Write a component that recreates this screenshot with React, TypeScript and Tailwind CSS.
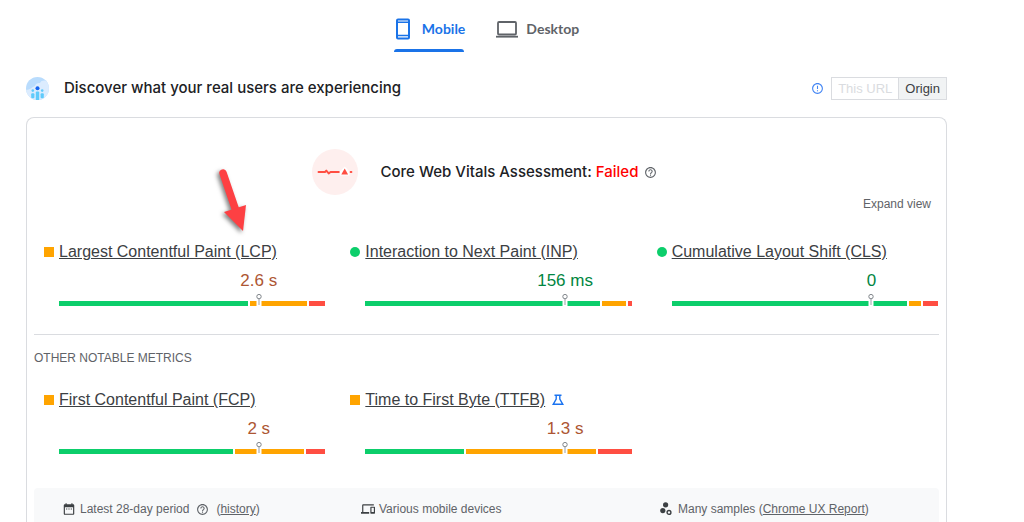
import React from "react";
import { MdDateRange, MdDevices, MdErrorOutline, MdHelpOutline } from "react-icons/md";

type Status = "good" | "average";

interface Metric {
  name: string;
  value: string;
  status: Status;
  // good, needs improvement, poor
  split: [number, number, number];
  experimental?: boolean;
}

const coreMetrics: Metric[] = [
  { name: "Largest Contentful Paint (LCP)", value: "2.6 s", status: "average", split: [189, 57, 16] },
  { name: "Interaction to Next Paint (INP)", value: "156 ms", status: "good", split: [234, 24, 4] },
  { name: "Cumulative Layout Shift (CLS)", value: "0", status: "good", split: [235, 12, 15] },
];

const otherMetrics: Metric[] = [
  { name: "First Contentful Paint (FCP)", value: "2 s", status: "average", split: [174, 69, 19] },
  {
    name: "Time to First Byte (TTFB)",
    value: "1.3 s",
    status: "average",
    split: [99, 129, 34],
    experimental: true,
  },
];

const barColors = ["bg-[#0cce6b]", "bg-[#ffa400]", "bg-[#ff4e42]"];

const PhoneIcon = () => (
  <svg width="16" height="22" viewBox="0 0 16 22" fill="none" stroke="currentColor" aria-hidden="true">
    <rect x="2" y="1.5" width="12" height="19" rx="1" strokeWidth="2" />
    <path d="M2 4.3h12M2 17.5h12" strokeWidth="1.6" />
  </svg>
);

const LaptopIcon = () => (
  <svg width="22" height="17" viewBox="0 0 22 17" fill="none" stroke="currentColor" aria-hidden="true">
    <rect x="2" y="1" width="18" height="12.5" rx="1" strokeWidth="1.8" />
    <path d="M0 15.7h22" strokeWidth="1.8" />
  </svg>
);

const UsersIcon = () => (
  <svg width="23" height="23" viewBox="0 0 23 23" aria-hidden="true">
    <clipPath id="users-clip">
      <circle cx="11.5" cy="11.5" r="11.5" />
    </clipPath>
    <g clipPath="url(#users-clip)">
      <rect width="23" height="23" fill="#b9dcfd" />
      <path d="M0 13c4 0 6-3 9-4 1-3 3-3 5-3 1-3 4-3 10-2v20H0z" fill="#dcecfe" />
      <g fill="#5fcbfb">
        <rect x="5.2" y="16.2" width="3.2" height="5" rx="1" />
        <rect x="9.8" y="14.5" width="3.4" height="9" rx="1" />
        <rect x="14.6" y="16.2" width="3.2" height="5" rx="1" />
        <circle cx="6.8" cy="13.6" r="1.3" />
        <circle cx="16.2" cy="13.6" r="1.3" />
      </g>
      <circle cx="11.5" cy="11.3" r="2" fill="#1565f0" />
    </g>
  </svg>
);

const PulseIcon = () => (
  <svg width="46" height="46" viewBox="0 0 46 46" aria-hidden="true">
    <circle cx="23" cy="23" r="23" fill="#feefee" />
    <path
      d="M6.5 23H13l1.3-1.4 2.4 2.8 1.8-1.4h8.5"
      fill="none"
      stroke="#ff4e42"
      strokeWidth="1.9"
      strokeLinecap="round"
      strokeLinejoin="round"
    />
    <path d="M27.8 26.5v-4l5-5 4.6 5v4z" fill="#fff" />
    <path d="M29.3 25.6l3.4-6 3.4 6z" fill="#ff4e42" />
    <path d="M38.6 23h.8" stroke="#ff4e42" strokeWidth="2" strokeLinecap="round" />
  </svg>
);

const FlaskIcon = () => (
  <svg width="12" height="12" viewBox="0 0 12 12" fill="none" stroke="#1a73f0" strokeWidth="1.4" aria-hidden="true">
    <path d="M2.5 1.2h7M4.2 1.2v3.9L1.2 10.3h9.6L7.8 5.1V1.2" />
  </svg>
);

const SamplesIcon = () => (
  <svg width="12" height="14" viewBox="0 0 12 14" fill="#3c4043" aria-hidden="true">
    <circle cx="5.6" cy="2.8" r="2.6" />
    <circle cx="2.8" cy="8.6" r="2.6" />
    <circle cx="9" cy="10.4" r="1.9" fill="none" stroke="#3c4043" strokeWidth="1.4" />
  </svg>
);

const Pin = () => (
  <svg className="absolute bottom-0 left-3/4 -translate-x-1/2" width="7" height="13" viewBox="0 0 7 13" aria-hidden="true">
    <rect x="1" y="7" width="5" height="6" fill="#fff" />
    <path d="M3.5 6v6" stroke="#9aa0a6" />
    <circle cx="3.5" cy="3.6" r="2.2" fill="#fff" stroke="#80868b" />
  </svg>
);

const MetricItem = ({ metric }: { metric: Metric }) => {
  const good = metric.status === "good";
  return (
    <div>
      <div className="flex h-6 items-center">
        <span className={good ? "size-[10px] rounded-full bg-[#0cce6b]" : "size-[10px] bg-[#ffa400]"} />
        <a href="#" className="ml-[5px] text-base whitespace-nowrap text-[#3c4043] underline">
          {metric.name}
        </a>
        {metric.experimental && (
          <span className="ml-[7px]">
            <FlaskIcon />
          </span>
        )}
      </div>
      <div className="ml-[15px]">
        <div className="mt-[5px] flex h-6 w-3/4 justify-end">
          {/* zero-width box so the value is centred over the pin */}
          <div className="flex w-0 justify-center">
            <span
              className={
                good
                  ? "text-[17px]/6 whitespace-nowrap text-[#018642]"
                  : "text-[17px]/6 whitespace-nowrap text-[#ad5633]"
              }
            >
              {metric.value}
            </span>
          </div>
        </div>
        <div className="relative flex h-[13px] items-end gap-[2px]">
          {metric.split.map((part, i) => (
            <span key={i} className={`h-[5px] ${barColors[i]}`} style={{ flex: `${part} 1 0px` }} />
          ))}
          <Pin />
        </div>
      </div>
    </div>
  );
};

const Arrow = () => (
  <svg
    className="absolute top-[45px] left-[184px] drop-shadow-[-2px_2px_2px_rgba(0,0,0,0.5)]"
    width="42"
    height="74"
    viewBox="0 0 42 74"
    aria-hidden="true"
  >
    <path d="M12 10l13 38" stroke="#fd4043" strokeWidth="7.5" strokeLinecap="round" />
    <path d="M13 49l22-7-3 26z" fill="#fd4043" />
  </svg>
);

const App = () => {
  return (
    <div className="bg-white pr-[77px] pl-[26px] font-['Liberation_Sans',Arial,sans-serif] text-[#5f6368]">
      <nav className="flex justify-center gap-[31px] pt-[9px] font-['Lato',sans-serif] text-sm font-bold">
        <button className="flex flex-col text-[#1a73e8]">
          <span className="flex h-10 items-center gap-[11px] pl-[1px]">
            <PhoneIcon />
            Mobile
          </span>
          <span className="h-[3px] w-[70px] rounded-t-full bg-[#1a73e8]" />
        </button>
        <button className="flex h-10 items-center gap-2">
          <LaptopIcon />
          Desktop
        </button>
      </nav>

      <header className="mt-[25px] flex h-[23px] items-center">
        <UsersIcon />
        <h1 className="ml-[15px] font-['Inter',sans-serif] text-[15px] font-medium text-[#202124]">
          Discover what your real users are experiencing
        </h1>
        <div className="ml-auto flex items-center">
          <MdErrorOutline className="mr-[7px] size-[13px] text-[#4285f4]" />
          <button className="h-[23px] border border-[#dadce0] px-[6px] text-[13px] text-[#dadce0]">
            This URL
          </button>
          <button className="h-[23px] border border-l-0 border-[#dadce0] bg-[#f1f3f4] px-[6px] text-[13px] text-[#3c4043]">
            Origin
          </button>
        </div>
      </header>

      <main className="relative mt-[17px] rounded-t-lg border border-b-0 border-[#dadce0] px-[7px] pt-[31px]">
        <div className="flex items-center justify-center pr-1">
          <PulseIcon />
          <h2 className="ml-[23px] font-['Inter',sans-serif] text-[15px] font-medium text-[#202124]">
            Core Web Vitals Assessment: <span className="text-[#f00]">Failed</span>
          </h2>
          <MdHelpOutline className="ml-[6px] size-[13px]" />
        </div>
        <div className="flex justify-end pr-2">
          <button className="text-xs/[18px]">Expand view</button>
        </div>

        <section className="mt-[27px] mr-[1px] ml-[10px] grid grid-cols-3 gap-[25px]">
          {coreMetrics.map((metric) => (
            <MetricItem key={metric.name} metric={metric} />
          ))}
        </section>

        <hr className="mt-7 border-[#dadce0]" />
        <h3 className="mt-[15px] text-xs uppercase">Other notable metrics</h3>

        <section className="mt-[22px] mr-[1px] ml-[10px] grid grid-cols-3 gap-[25px]">
          {otherMetrics.map((metric) => (
            <MetricItem key={metric.name} metric={metric} />
          ))}
        </section>

        <footer className="mt-[34px] grid grid-cols-3 rounded-t-sm bg-[#f8f9fa] px-1 pt-3 pb-1 text-xs/[18px]">
          <div className="flex items-center pl-6">
            <MdDateRange className="mr-1 size-[14px] text-[#3c4043]" />
            Latest 28-day period
            <MdHelpOutline className="mx-[7px] size-[13px]" />
            <span>
              (
              <a href="#" className="underline">
                history
              </a>
              )
            </span>
          </div>
          <div className="flex items-center pl-6">
            <MdDevices className="mr-1 size-[14px] text-[#3c4043]" />
            Various mobile devices
          </div>
          <div className="flex items-center gap-[6px] pl-6">
            <SamplesIcon />
            <span>
              Many samples (
              <a href="#" className="underline">
                Chrome UX Report
              </a>
              )
            </span>
          </div>
        </footer>

        <Arrow />
      </main>
    </div>
  );
};

export default App;
